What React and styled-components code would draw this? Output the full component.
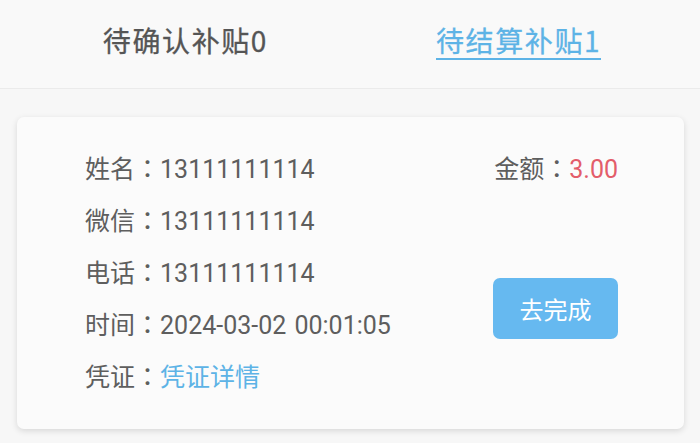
import React from "react";
import styled, { createGlobalStyle } from "styled-components";

const Global = createGlobalStyle`
  html, body { margin: 0; padding: 0; background: #f7f7f7; }
  body { font-family: Roboto, "Noto Sans CJK SC", sans-serif; }
`;

const Page = styled.div`
  width: 700px;
  height: 443px;
  background: #f7f7f7;
  overflow: hidden;
`;

const TabBar = styled.div`
  height: 88px;
  border-bottom: 1px solid #ebebeb;
  background: #f9f9f9;
  display: flex;
  justify-content: center;
  align-items: flex-start;
  gap: 168px;
  padding-left: 4px;
  box-sizing: content-box;
`;

const Tab = styled.div`
  margin-top: 22px;
  font-family: "Noto Sans CJK SC", sans-serif;
  font-size: 28px;
  letter-spacing: 1.6px;
  line-height: 36px;
  font-weight: 400;
  -webkit-text-stroke: 0.3px ${(p) => (p.$active ? "#5db3e6" : "#555555")};
  color: ${(p) => (p.$active ? "#5db3e6" : "#555555")};
  border-bottom: 2px solid ${(p) => (p.$active ? "#5db3e6" : "transparent")};
`;

const Body = styled.div`
  padding: 28px 16px 0 17px;
`;

const Card = styled.div`
  background: #fbfbfb;
  border-radius: 7px;
  box-shadow: 0 2px 6px rgba(0, 0, 0, 0.13);
  padding: 27px 66px 25px 68px;
  display: flex;
  justify-content: space-between;
`;

const Info = styled.div`
  display: flex;
  flex-direction: column;
`;

const Row = styled.div`
  height: 52px;
  font-size: 25px;
  line-height: 52px;
  color: #5e5e5e;
  white-space: nowrap;
`;

const Colon = styled.span`
  font-family: "Noto Sans CJK TC", sans-serif;
  line-height: 1;
`;

const Time = styled.span`
  word-spacing: 2px;
`;

const Link = styled.span`
  color: #5db3e6;
`;

const Amount = styled.span`
  color: #e35d6a;
`;

const Side = styled.div`
  display: flex;
  flex-direction: column;
  align-items: flex-end;
`;

const Button = styled.button`
  margin-top: 82px;
  width: 125px;
  height: 61px;
  border: none;
  border-radius: 7px;
  background: #66b9f0;
  color: #ffffff;
  font-family: Roboto, "Noto Sans CJK SC", sans-serif;
  font-size: 24px;
  padding: 0;
`;

const Field = ({ label, children }) => (
  <Row>
    {label}
    <Colon>：</Colon>
    {children}
  </Row>
);

export default function App() {
  return (
    <Page>
      <Global />
      <TabBar>
        <Tab>待确认补贴0</Tab>
        <Tab $active>待结算补贴1</Tab>
      </TabBar>
      <Body>
        <Card>
          <Info>
            <Field label="姓名">13111111114</Field>
            <Field label="微信">13111111114</Field>
            <Field label="电话">13111111114</Field>
            <Field label="时间">
              <Time>2024-03-02 00:01:05</Time>
            </Field>
            <Field label="凭证">
              <Link>凭证详情</Link>
            </Field>
          </Info>
          <Side>
            <Field label="金额">
              <Amount>3.00</Amount>
            </Field>
            <Button>去完成</Button>
          </Side>
        </Card>
      </Body>
    </Page>
  );
}
